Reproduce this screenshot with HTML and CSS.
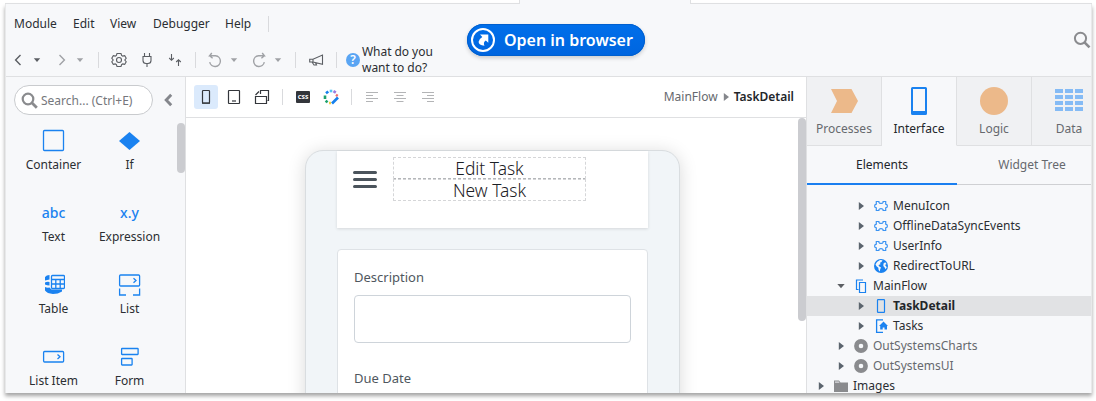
FILE: index.html
```html
<!DOCTYPE html>
<html lang="en">
<head>
<meta charset="utf-8">
<title>Service Studio</title>
<link rel="stylesheet" href="styles.css">
</head>
<body>
<svg class="defs" width="0" height="0" aria-hidden="true">
  <symbol id="caret" viewBox="0 0 8 8"><path d="M.8 2.200h6.400L4 5.900z" fill="currentColor"/></symbol>
  <symbol id="tri" viewBox="0 0 8 8"><path d="M1.800 0v8L7 4z" fill="currentColor"/></symbol>
  <symbol id="block" viewBox="0 0 14 14"><path d="M2.300 2.500h2.600v.8Q5.200 4.400 7 4.400t2.100-1.100v-.8h2.600v2.600q1.700.2 1.700 1.900t-1.700 1.900v2.600H9.100v-.8Q8.800 9.600 7 9.600t-2.100 1.100v.8H2.300V8.900Q.6 8.700.6 7t1.700-1.900z" fill="none" stroke="#3a93f2" stroke-width="1.200"/></symbol>
  <symbol id="ring" viewBox="0 0 14 14"><circle cx="7" cy="7" r="4.600" fill="none" stroke="#8a8b8e" stroke-width="4.600"/></symbol>
</svg>
<div class="strip"><div class="strip-line"></div><div class="strip-tab"></div><div class="strip-line"></div></div>
<div class="window">
  <header class="header">
    <div class="commands">
      <nav class="menu"><span>Module</span><span>Edit</span><span>View</span><span>Debugger</span><span>Help</span><i class="sep"></i></nav>
      <div class="tools">
        <svg class="back dark" width="16" height="16" viewBox="0 0 16 16"><path d="M10.500 3L5.600 8l4.900 5" class="line thick"/></svg>
        <svg class="g7 dark" width="8" height="8"><use href="#caret"/></svg>
        <svg class="g13" width="16" height="16" viewBox="0 0 16 16"><path d="M5.500 3l4.900 5-4.900 5" class="line thick"/></svg>
        <svg class="g6" width="8" height="8"><use href="#caret"/></svg>
        <i class="sep g14"></i>
        <svg class="g12 dark" width="16" height="16" viewBox="0 0 16 16"><path d="M6 1.500h4l.6 2 1.100.6 2-.5 1.500 2.700L13.800 8l1.400 1.700-1.500 2.700-2-.5-1.100.6-.6 2H6l-.6-2-1.100-.6-2 .5L.8 9.700 2.200 8 .8 6.300l1.500-2.700 2 .5 1.100-.6z" class="line"/><circle cx="8" cy="8" r="2.500" class="line"/></svg>
        <svg class="g12 dark" width="16" height="16" viewBox="0 0 16 16"><path d="M5.500 1v3.500M10.500 1v3.500M4 4.500h8v4Q12 11.500 9 11.500H7Q4 11.500 4 8.500zM8 11.500V15" class="line"/></svg>
        <svg class="g12 dark" width="16" height="16" viewBox="0 0 16 16"><path d="M4.500 2v6M2.200 6l2.300 2.300L6.800 6M11.500 14V7.500M9.200 10l2.300-2.300 2.300 2.300" class="line"/></svg>
        <i class="sep g12"></i>
        <svg class="g11" width="16" height="16" viewBox="0 0 16 16"><path d="M4.800 1L2.600 3.700H8.500a5.400 5.400 0 1 1-5.800 6.500M2.600 3.700l3 2.500" class="line thick"/></svg>
        <svg class="g7" width="8" height="8"><use href="#caret"/></svg>
        <svg class="g13" width="16" height="16" viewBox="0 0 16 16"><path d="M11.200 1l2.200 2.700H7.500a5.400 5.400 0 1 0 5.800 6.500M13.400 3.700l-3 2.500" class="line thick"/></svg>
        <svg class="g7" width="8" height="8"><use href="#caret"/></svg>
        <i class="sep g13"></i>
        <svg class="g12 dark" width="16" height="16" viewBox="0 0 16 16"><path d="M14.500 3v9.300L5 10H1.700V7.200H5zM5 7.200V10M4 10l2 3h2.500l-1-2.300" class="line"/></svg>
        <i class="sep g12"></i>
        <span class="help">?</span>
        <span class="ask">What do you<br>want to do?</span>
      </div>
    </div>
    <div class="open"><svg width="24" height="24" viewBox="0 0 24 24"><circle cx="12" cy="12" r="11" fill="none" stroke="#fff" stroke-width="2"/><path d="M9 6.500h8.300v8.200l-2.500-2.300q-3 2-1.300 5.300Q7.500 17 7.600 13.700 8 11 11.300 9z" fill="#fff"/></svg><span>Open in browser</span></div>
    <svg class="find" width="18" height="18" viewBox="0 0 18 18"><circle cx="7.500" cy="7.300" r="5.600" fill="none" stroke="#8a8b8e" stroke-width="2"/><path d="M11.500 11.300l5 5" stroke="#8a8b8e" stroke-width="2.600"/></svg>
  </header>
  <main class="body">
    <aside class="toolbox">
      <div class="search-row">
        <div class="search"><svg width="17" height="17" viewBox="0 0 17 17"><circle cx="7" cy="7" r="5.300" fill="none" stroke="#8a8b8e" stroke-width="2.200"/><path d="M10.800 10.800l5 5" stroke="#8a8b8e" stroke-width="2.800"/></svg><span>Search... (Ctrl+E)</span></div>
        <svg class="collapse" width="10" height="14" viewBox="0 0 10 14"><path d="M8.200 1.800L3.200 7l5 5.200" fill="none" stroke="#85878c" stroke-width="2.900"/></svg>
      </div>
      <div class="widgets-wrap">
        <div class="widgets">
          <div class="widget"><svg width="24" height="24" viewBox="0 0 24 24"><rect x="2.500" y="1.500" width="20" height="20" rx="1" class="blue"/></svg><span>Container</span></div>
          <div class="widget"><svg width="24" height="24" viewBox="0 0 24 24"><path d="M12.500 3L23 12 12.500 21 2 12z" fill="#1a82f0"/></svg><span>If</span></div>
          <div class="widget"><b>abc</b><span>Text</span></div>
          <div class="widget"><b>x.y</b><span>Expression</span></div>
          <div class="widget"><svg width="24" height="24" viewBox="0 0 24 24"><path d="M4 4Q5.500 2 8.500 2V6.500L4 7.500V6zM4 9.500q2-1 4.500-.5V12.500q-2.500 0-4.500-1zM4 14q2 1 4.500.5l2 2H21v2Q17 21 12 21 6 20.500 4 17.500z" fill="#1a82f0"/><rect x="10.500" y="2.500" width="13" height="13" rx="1" class="blue"/><path d="M10.500 6.500h13M10.500 11h13M14.800 6.500v9M19.200 6.500v9" class="blue"/></svg><span>Table</span></div>
          <div class="widget"><svg width="24" height="24" viewBox="0 0 24 24"><rect x="2.600" y="2" width="20" height="11" rx="1" class="blue"/><path d="M16.500 5.200L19 7.500l-2.500 2.300M2.600 15.500V22H9M22.600 15.500V22H16" class="blue"/></svg><span>List</span></div>
          <div class="widget"><svg width="24" height="24" viewBox="0 0 24 24"><rect x="2.600" y="6.500" width="20" height="10.500" rx="1" class="blue"/><path d="M16.500 9.500l2.500 2.300-2.500 2.300" class="blue"/></svg><span>List Item</span></div>
          <div class="widget"><svg width="24" height="24" viewBox="0 0 24 24"><rect x="4.600" y="3.500" width="16.500" height="6" rx=".5" class="blue"/><rect x="4.600" y="13.500" width="10.500" height="6.500" rx=".5" class="blue"/></svg><span>Form</span></div>
        </div>
        <div class="thumb small"></div>
      </div>
    </aside>
    <section class="center">
      <div class="bar">
        <span class="picked"><svg width="10" height="16" viewBox="0 0 10 16"><rect x="1.500" y="1.500" width="7" height="12.500" rx=".7" class="ink"/><path d="M1 14.200h8" class="ink"/></svg></span>
        <svg class="g8" width="16" height="16" viewBox="0 0 16 16"><rect x="2.500" y="1.500" width="11" height="13" rx=".5" class="ink"/><path d="M6 12h4" class="ink"/></svg>
        <svg class="g12" width="16" height="16" viewBox="0 0 16 16"><path d="M1.500 7.500h11v7h-11zM6.500 5V1.500h8v10H13.500M1.500 6L5 2.500" class="ink"/></svg>
        <i class="sep g12"></i>
        <span class="css">CSS</span>
        <svg class="g12" width="18" height="18" viewBox="0 0 18 18"><g fill="none" stroke-width="2.600"><path d="M7.700 3h2.600" stroke="#54c6f5"/><path d="M11.500 3.200l2.300 1.500" stroke="#9b7be0"/><path d="M14 6.800l1.700 1.200" stroke="#f36b6b"/><path d="M6.300 3.500L4 5.300" stroke="#1680ed"/><path d="M3 7.500v3.500" stroke="#1ba06c"/><path d="M3.600 12.800l2 1.500" stroke="#1ba06c"/><path d="M7 15h2" stroke="#f2d044"/><path d="M10 15.500l6-6" stroke="#1680ed"/></g></svg>
        <i class="sep g11"></i>
        <svg class="g12" width="16" height="16" viewBox="0 0 16 16"><path d="M2 3.500h12M2 6.500h7M2 9.500h12M2 12.500h7" class="line faint"/></svg>
        <svg class="g12" width="16" height="16" viewBox="0 0 16 16"><path d="M2 3.500h12M4.500 6.500h7M2 9.500h12M4.500 12.500h7" class="line faint"/></svg>
        <svg class="g12" width="16" height="16" viewBox="0 0 16 16"><path d="M2 3.500h12M7 6.500h7M2 9.500h12M7 12.500h7" class="line faint"/></svg>
        <div class="crumbs"><span>MainFlow</span><svg width="8" height="8"><use href="#tri"/></svg><b>TaskDetail</b></div>
      </div>
      <div class="canvas">
        <div class="device">
          <div class="top">
            <svg width="24" height="18" viewBox="0 0 24 18"><path d="M1.500 1.500h21M1.500 8.500h21M1.500 15.500h21" stroke="#4b545c" stroke-width="3" stroke-linecap="round"/></svg>
            <div class="titles"><div>Edit Task</div><div>New Task</div></div>
          </div>
          <div class="card"><label>Description</label><div class="field"></div><label>Due Date</label></div>
        </div>
        <div class="thumb tall"></div>
      </div>
    </section>
    <aside class="panel">
      <div class="tabs">
        <div class="tab"><svg width="30" height="30" viewBox="0 0 30 30"><path d="M2 3h20.500L29 15l-6.500 12H2l6-12z" fill="#ecb98a"/></svg><span>Processes</span></div>
        <div class="tab on"><svg width="30" height="30" viewBox="0 0 30 30"><path d="M8.500 1h13q1.500 0 1.500 1.500v25q0 1.500-1.500 1.500h-13Q7 29 7 27.500v-25Q7 1 8.500 1zM9 3v22h12V3z" fill="#1a82f0" fill-rule="evenodd"/></svg><span>Interface</span></div>
        <div class="tab"><svg width="30" height="30" viewBox="0 0 30 30"><circle cx="15" cy="15" r="14" fill="#ecb98a"/></svg><span>Logic</span></div>
        <div class="tab"><svg width="30" height="30" viewBox="0 0 30 30"><path d="M1 5h28M1 11h28M1 17h28M1 23h28" stroke="#85bbf5" stroke-width="4" stroke-dasharray="8 2"/></svg><span>Data</span></div>
      </div>
      <div class="subtabs"><div class="on">Elements</div><div>Widget Tree</div></div>
      <div class="tree">
        <div class="row l2"><svg width="8" height="8"><use href="#tri"/></svg><svg width="14" height="14"><use href="#block"/></svg><span>MenuIcon</span></div>
        <div class="row l2"><svg width="8" height="8"><use href="#tri"/></svg><svg width="14" height="14"><use href="#block"/></svg><span>OfflineDataSyncEvents</span></div>
        <div class="row l2"><svg width="8" height="8"><use href="#tri"/></svg><svg width="14" height="14"><use href="#block"/></svg><span>UserInfo</span></div>
        <div class="row l2"><svg width="8" height="8"><use href="#tri"/></svg><svg width="14" height="14" viewBox="0 0 14 14"><circle cx="7" cy="7" r="7" fill="#1a82f0"/><path d="M6 1L8.500 1.200 7.500 3 6 3.800l.5 1.400-2 .8.500 1.200L7 8.500l-.8 1.700-.4 2.300-1.200-1.500-.3-2.200L2.500 7.200 1.500 5.500 3 3zM9.500 4.500l1.700-1.200 1.300 1.800-1.500 1 1.800 2.100-1.300 2-1-1.900L9.300 7z" fill="#f7f8fa"/></svg><span>RedirectToURL</span></div>
        <div class="row l1"><svg width="8" height="8"><path d="M.3 2h7.400L4 6.300z" fill="#5c5f63"/></svg><svg width="14" height="14" viewBox="0 0 14 14"><path d="M9 1H2.500v9.500h2M5.500 3.500h6v10h-6z" fill="none" stroke="#1a82f0" stroke-width="1.200"/></svg><span>MainFlow</span></div>
        <div class="row l2 sel"><svg width="8" height="8"><use href="#tri"/></svg><svg width="14" height="14" viewBox="0 0 14 14"><rect x="3.500" y=".7" width="7" height="12.600" rx=".6" fill="none" stroke="#1a82f0" stroke-width="1.200"/></svg><span>TaskDetail</span></div>
        <div class="row l2"><svg width="8" height="8"><use href="#tri"/></svg><svg width="14" height="14" viewBox="0 0 14 14"><path d="M9 .8H2.600v12.500H9" fill="none" stroke="#1a82f0" stroke-width="1.300"/><path d="M9.500 2.500L14 7h-1v3.500h-2.500V8.500h-1.800v2H6.200V7H5z" fill="#1a82f0"/></svg><span>Tasks</span></div>
        <div class="row l1 mute"><svg width="8" height="8"><use href="#tri"/></svg><svg width="14" height="14"><use href="#ring"/></svg><span>OutSystemsCharts</span></div>
        <div class="row l1 mute"><svg width="8" height="8"><use href="#tri"/></svg><svg width="14" height="14"><use href="#ring"/></svg><span>OutSystemsUI</span></div>
        <div class="row l0"><svg width="8" height="8"><use href="#tri"/></svg><svg width="14" height="14" viewBox="0 0 14 14"><path d="M0 1.500h5L6.500 3.500H14v9.500H0z" fill="#8a8b8e"/><path d="M1 2.500h3.800l.8 1.200H1z" fill="#dcdde0"/></svg><span>Images</span></div>
      </div>
    </aside>
  </main>
</div>
</body>
</html>
```

FILE: styles.css
```css
* { box-sizing: border-box; }
body { margin: 0; padding: 0 3px 0 5px; width: 1096px; height: 401px; overflow: hidden; background: #fff; color: #2b2e32; font: 12px/16px "Noto Sans", sans-serif; }
svg { display: block; flex: none; }
.defs { position: absolute; }
.strip { display: grid; grid-template-columns: 514px 172px 401px; height: 4px; }
.strip-line { border-bottom: 1px solid #dfe0e2; }
.strip-tab { background: #f7f8fa; border: solid #dfe0e2; border-width: 0 1px; }
.window { height: 389px; width: 1087px; display: flex; flex-direction: column; background: #f7f8fa; border: solid #e8e9ea; border-width: 0 1px; box-shadow: 0 3px 4px rgba(0,0,0,.36); overflow: hidden; }
.sep { width: 1px; height: 16px; background: #d9dadd; flex: none; }
.header { height: 73px; flex: none; display: flex; border-bottom: 1px solid #dfe0e2; }
.commands { width: 461px; flex: none; }
.menu { height: 39px; padding-left: 8px; display: grid; grid-template-columns: 59px 37px 43px 72px 43px 1px; align-items: center; }
.tools { height: 33px; display: flex; align-items: center; color: #a0a2a6; }
.dark { color: #5b5e63; }
.line { fill: none; stroke: currentColor; stroke-width: 1.1; }
.thick { stroke-width: 1.4; }
.faint { stroke: #b3b4b6; stroke-width: 1; }
.back { margin-left: 4px; }
.g6 { margin-left: 6px; } .g7 { margin-left: 7px; } .g8 { margin-left: 8px; } .g11 { margin-left: 11px; }
.g12 { margin-left: 12px; } .g13 { margin-left: 13px; } .g14 { margin-left: 14px; }
.help { width: 14px; height: 14px; margin-left: 9px; border-radius: 50%; background: #5aa5f3; color: #fff; font-weight: 600; line-height: 14px; text-align: center; }
.ask { margin-left: 2px; color: #2b2e32; letter-spacing: -.05px; white-space: nowrap; }
.open { width: 178px; height: 32px; margin-top: 20px; padding-left: 4px; display: flex; align-items: center; gap: 9px; border-radius: 16px; background: linear-gradient(#006fea, #0065df); box-shadow: 0 2px 4px rgba(0,0,0,.18), inset 0 0 0 1px #0060cf; color: #fff; font-size: 16px; font-weight: 600; line-height: 30px; white-space: nowrap; }
.open span { padding-bottom: 1px; }
.find { margin: 27px 0 0 auto; }
.body { flex: 1; min-height: 0; display: grid; grid-template-columns: 180px 621px 284px; }
.toolbox { border-right: 1px solid #dfe0e2; overflow: hidden; }
.search-row { height: 46px; display: flex; align-items: center; padding-left: 8px; gap: 10px; }
.search { width: 139px; height: 30px; border: 1px solid #c9cbce; border-radius: 15px; background: #fff; color: #75777c; display: flex; align-items: center; gap: 3px; padding-left: 6px; white-space: nowrap; }
.search span { padding-top: 1px; }
.widgets-wrap { display: flex; }
.widgets { width: 171px; padding: 6px 0 0 9.5px; display: grid; grid-template-columns: 76px 76px; grid-auto-rows: 72px; }
.widget { display: flex; flex-direction: column; align-items: center; gap: 4px; white-space: nowrap; }
.widget b { height: 24px; line-height: 24px; font-size: 14px; font-weight: 500; color: #1a82f0; }
.widget svg { margin-left: -1px; }
.blue { fill: none; stroke: #1a82f0; stroke-width: 1.3; }
.thumb { width: 8px; border-radius: 4px; background: #cbccd0; }
.small { height: 50px; }
.center { background: #fff; border-right: 1px solid #dfe0e2; display: flex; flex-direction: column; min-height: 0; }
.bar { height: 41px; flex: none; display: flex; align-items: center; border-bottom: 1px solid #dfe0e2; padding: 0 12px 0 8px; }
.picked { width: 24px; height: 24px; border-radius: 3px; background: #dbeafc; display: flex; align-items: center; justify-content: center; }
.ink { fill: none; stroke: #33363b; stroke-width: 1.2; }
.css { width: 14px; height: 12px; margin-left: 13px; border-radius: 1px; background: #33363b; color: #fff; font-size: 6px; line-height: 12px; font-weight: 800; text-align: center; }
.crumbs { margin-left: auto; display: flex; align-items: center; gap: 4px; color: #66696e; }
.crumbs svg { color: #85878c; }
.crumbs b { font-weight: 600; color: #23262a; }
.canvas { flex: 1; min-height: 0; display: flex; justify-content: space-between; padding-left: 119px; overflow: hidden; }
.device { width: 375px; height: 300px; margin-top: 32px; padding: 0 31px; border: 1px solid #d9dde0; border-radius: 18px; background: #f1f5f8; box-shadow: 0 2px 18px rgba(0,0,0,.15); }
.top { width: 311px; height: 77px; padding: 6px 0 0 16px; display: flex; gap: 16px; background: #fff; box-shadow: 0 1px 3px rgba(0,0,0,.12); }
.top > svg { margin-top: 14px; }
.titles { width: 193px; font: 300 17.400px/21px "Noto Sans", sans-serif; text-align: center; color: #1c2025; }
.titles div { height: 22px; border: 1px dashed #d5d6d8; }
.titles div:first-child { border-bottom-color: #b5b7ba; }
.card { width: 311px; height: 200px; margin-top: 21px; padding: 19px 16px; border: 1px solid #dee2e6; border-radius: 4px; background: #fff; color: #4f575e; font-size: 13px; }
.card label { display: block; height: 16px; line-height: 16px; }
.field { width: 277px; height: 48px; margin: 10px 0 27px; border: 1px solid #ced4da; border-radius: 4px; }
.tall { height: 203px; }
.panel { overflow: hidden; }
.tabs { display: grid; grid-template-columns: repeat(4, 75px); height: 69px; }
.tab { display: flex; flex-direction: column; align-items: center; gap: 5px; padding-top: 9px; background: #f0f1f3; color: #66696e; border: solid #dfe0e2; border-width: 0 1px 1px 0; }
.tab.on { background: none; border-bottom-color: transparent; color: #23262a; }
.subtabs { height: 39px; display: grid; grid-template-columns: 150px 150px; text-align: center; line-height: 37px; color: #66696e; }
.subtabs div { border-bottom: 1px solid #cfd0d3; }
.subtabs .on { border-bottom: 2px solid #1a7ff0; color: #23262a; }
.tree { padding-top: 11px; color: #5b646d; }
.row { height: 20px; display: flex; align-items: center; white-space: nowrap; }
.row svg:nth-child(2) { margin: 0 5px 0 9px; }
.row span { color: #2b2e32; }
.l0 { padding-left: 10px; } .l1 { padding-left: 30px; } .l2 { padding-left: 50px; }
.sel { background: #e1e2e4; }
.row.sel span { font-weight: 700; color: #23262a; }
.row.mute span { color: #66696e; }
```
